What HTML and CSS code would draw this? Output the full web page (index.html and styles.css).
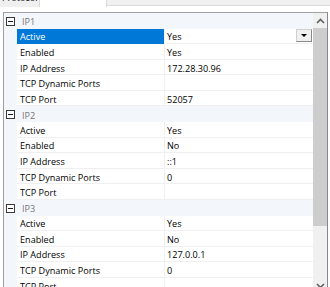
FILE: index.html
```html
<!DOCTYPE html>
<html lang="en">
<head>
    <meta charset="UTF-8">
    <title>Protocol - TCP/IP Properties</title>
    <link rel="stylesheet" href="styles.css">
</head>
<body>
    <div class="tabs">
        <div class="tab"><span class="tab-label">Protocol</span></div>
        <div class="tab current"><span class="tab-label">IP Addresses</span></div>
        <div class="tab-fill"></div>
    </div>

    <div class="grid">
        <div class="sheet">
            <div class="cat"><span class="exp"></span><span class="cat-name">IP1</span></div>
            <div class="prop"><div class="name sel">Active</div><div class="value">Yes<span class="drop"></span></div></div>
            <div class="prop"><div class="name">Enabled</div><div class="value">Yes</div></div>
            <div class="prop"><div class="name">IP Address</div><div class="value">172.28.30.96</div></div>
            <div class="prop"><div class="name">TCP Dynamic Ports</div><div class="value"></div></div>
            <div class="prop"><div class="name">TCP Port</div><div class="value">52057</div></div>

            <div class="cat"><span class="exp"></span><span class="cat-name">IP2</span></div>
            <div class="prop"><div class="name">Active</div><div class="value">Yes</div></div>
            <div class="prop"><div class="name">Enabled</div><div class="value">No</div></div>
            <div class="prop"><div class="name">IP Address</div><div class="value">::1</div></div>
            <div class="prop"><div class="name">TCP Dynamic Ports</div><div class="value">0</div></div>
            <div class="prop"><div class="name">TCP Port</div><div class="value"></div></div>

            <div class="cat"><span class="exp"></span><span class="cat-name">IP3</span></div>
            <div class="prop"><div class="name">Active</div><div class="value">Yes</div></div>
            <div class="prop"><div class="name">Enabled</div><div class="value">No</div></div>
            <div class="prop"><div class="name">IP Address</div><div class="value">127.0.0.1</div></div>
            <div class="prop"><div class="name">TCP Dynamic Ports</div><div class="value">0</div></div>
            <div class="prop"><div class="name">TCP Port</div><div class="value"></div></div>
        </div>

        <div class="scrollbar">
            <div class="arrow">
                <svg width="9" height="6" viewBox="0 0 9 6"><path d="M1 5 L4.5 1.5 L8 5" fill="none" stroke="#606060" stroke-width="1.6"/></svg>
            </div>
            <div class="track"><div class="thumb"></div></div>
            <div class="arrow">
                <svg width="9" height="6" viewBox="0 0 9 6"><path d="M1 1 L4.5 4.5 L8 1" fill="none" stroke="#606060" stroke-width="1.6"/></svg>
            </div>
        </div>
    </div>
</body>
</html>
```

FILE: styles.css
```css
body {
    margin: 0;
    width: 330px;
    height: 287px;
    overflow: hidden;
    background-color: white;
    font-family: "Open Sans", sans-serif;
    font-size: 9.1px;
    color: #000;
}
.tabs {
    display: flex;
    height: 7px;
    overflow: hidden;
}
.tab {
    width: 39px;
    background-color: #f0f0f0;
    border-right: 1px solid #d9d9d9;
    overflow: hidden;
}
.tab.current {
    width: 66px;
    background-color: white;
}
.tab.current .tab-label {
    visibility: hidden;
}
.tab-label {
    display: block;
    margin-top: -8px;
    padding-left: 2px;
    line-height: 12px;
    white-space: nowrap;
}
.tab-fill {
    flex: 1;
    height: 5px;
    background-color: #f0f0f0;
    border-bottom: 1px solid #dadada;
}
.grid {
    display: flex;
    height: 280px;
    margin: 5px 2px 0 3px;
    border: 1px solid #a0a0a0;
    border-right-color: #828790;
}
.sheet {
    flex: 1;
    background-color: #f3f6fb;
    overflow: hidden;
}
.cat {
    display: flex;
    align-items: center;
    box-sizing: border-box;
    height: 15.58px;
    padding-top: 2px;
}
.exp {
    position: relative;
    width: 7px;
    height: 7px;
    margin: -1px 4px 0 2px;
    border: 1px solid #3a3a3a;
    background-color: white;
}
.exp::after {
    content: "";
    position: absolute;
    left: 1px;
    right: 1px;
    top: 3px;
    height: 1px;
    background-color: #1a1a1a;
}
.cat-name {
    padding-left: 3px;
    color: #777;
}
.prop {
    display: flex;
    height: 15.58px;
    margin-left: 13px;
    background-color: white;
}
.name, .value {
    display: flex;
    align-items: center;
    box-sizing: border-box;
    padding-top: 2px;
    border-bottom: 1px solid #f0f0f0;
    white-space: nowrap;
}
.name {
    width: 147px;
    padding-left: 3px;
}
.name.sel {
    background-color: #0078d7;
    border-bottom-color: #0078d7;
    color: white;
}
.value {
    flex: 1;
    padding-left: 2px;
    border-left: 1px solid #f0f0f0;
}
.drop {
    position: relative;
    width: 14px;
    height: 11px;
    margin: -2px 1px 0 auto;
    background-color: #f0f0f0;
    border: 1px solid #d0d0d0;
    border-right-color: #8a8a8a;
    border-bottom-color: #8a8a8a;
}
.drop::after {
    content: "";
    position: absolute;
    left: 4px;
    top: 4px;
    border-left: 3px solid transparent;
    border-right: 3px solid transparent;
    border-top: 3px solid #000;
}
.scrollbar {
    display: flex;
    flex-direction: column;
    width: 14px;
    background-color: #f0f0f0;
}
.arrow {
    display: flex;
    align-items: center;
    justify-content: center;
    height: 15px;
}
.track {
    flex: 1;
}
.thumb {
    height: 198px;
    background-color: #cdcdcd;
}
```
